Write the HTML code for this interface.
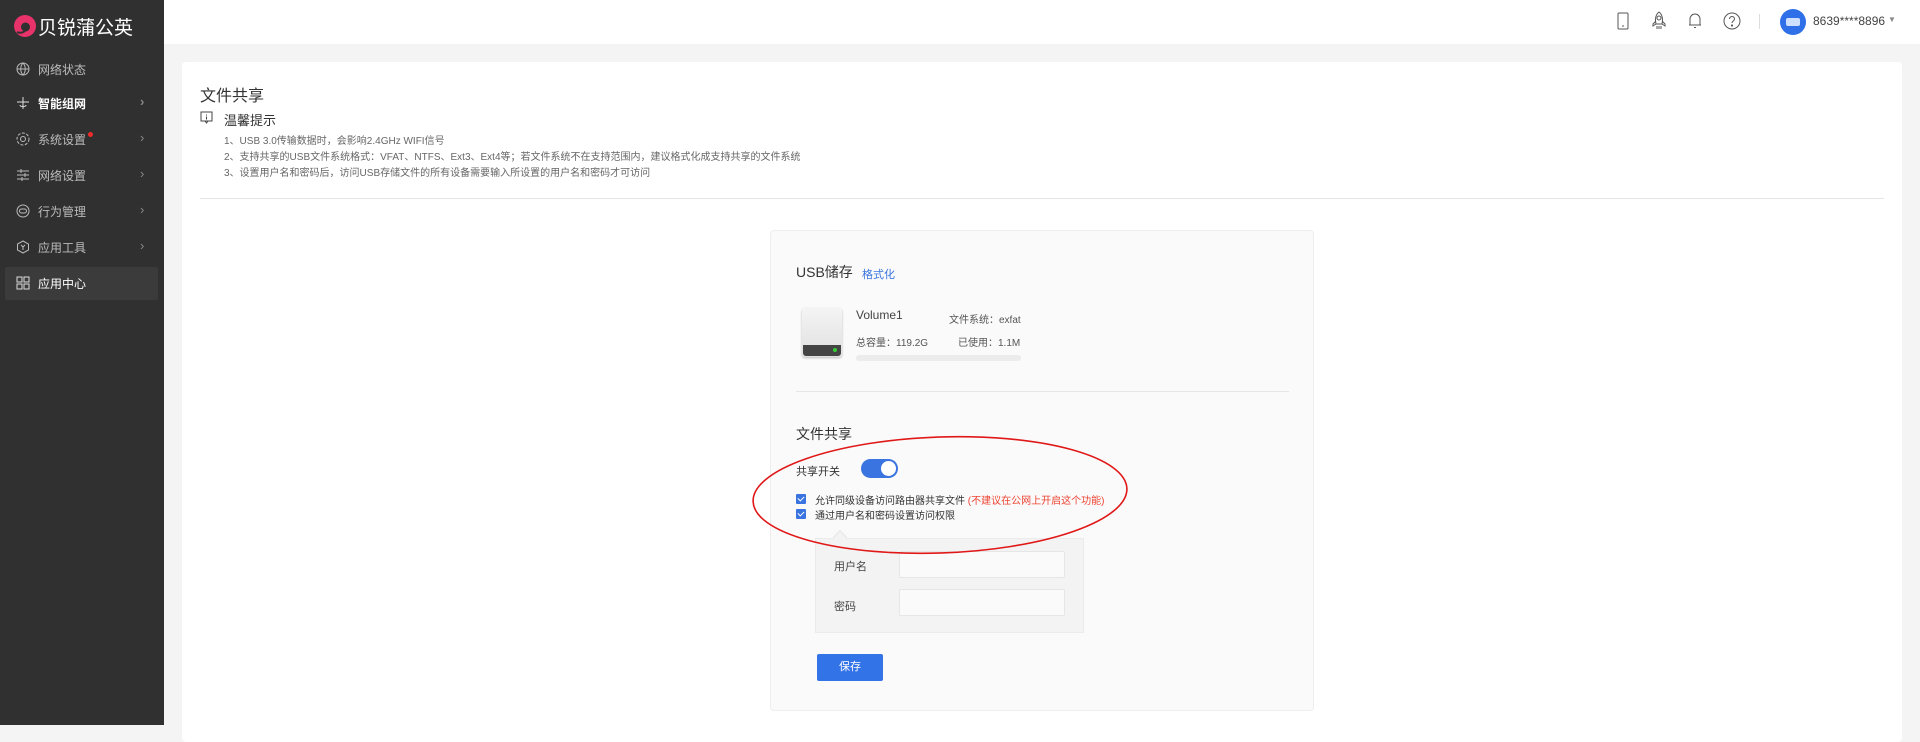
<!DOCTYPE html>
<html><head><meta charset="utf-8"><style>
*{margin:0;padding:0;box-sizing:border-box}
body{width:1920px;height:725px;overflow:hidden;background:#f4f4f4;font-family:"Liberation Sans","Noto Sans CJK SC",sans-serif;position:relative;color:#333}
.a{position:absolute}
#side{left:0;top:0;width:164px;height:725px;background:#303030}
#head{left:164px;top:0;width:1756px;height:44px;background:#fff}
.mi{position:absolute;left:0;width:164px;height:34px;color:#bbb;font-size:12px}
.mi span{position:absolute;left:38px;top:8px}
.mi svg{position:absolute;left:16px;top:9px}
.mi .ch{position:absolute;left:140px;top:7px;color:#888;font-size:13px;font-style:normal}
#card{left:182px;top:62px;width:1720px;height:680px;background:#fff;border-radius:4px}
.t{position:absolute;white-space:nowrap}
#panel{left:770px;top:230px;width:544px;height:481px;background:#fafafa;border:1px solid #eee;border-radius:4px}
.cb{position:absolute;width:10px;height:10px;background:#3a74e0;border-radius:1px}
.cb:after{content:"";position:absolute;left:3px;top:1px;width:3px;height:5px;border:solid #fff;border-width:0 1px 1px 0;transform:rotate(45deg)}
.inp{position:absolute;background:#fafafa;border:1px solid #e6e6e6;border-radius:2px}
</style></head><body>
<div id="side" class="a">
 <svg class="a" style="left:13px;top:14px" width="24" height="24" viewBox="0 0 24 24"><circle cx="12" cy="12" r="11" fill="#e8336a"/><circle cx="12.5" cy="13" r="4.5" fill="#303030"/><path d="M4 18 Q8 20 12 17" stroke="#303030" stroke-width="2" fill="none"/></svg>
 <div class="t" style="left:38px;top:13px;color:#fff;font-size:19px">贝锐蒲公英</div>
 <div class="mi" style="top:53px"><svg width="14" height="14" viewBox="0 0 14 14" fill="none" stroke="#bbb"><circle cx="7" cy="7" r="6"/><path d="M1 7h12M7 1c-3 3-3 9 0 12M7 1c3 3 3 9 0 12"/></svg><span>网络状态</span></div>
 <div class="mi" style="top:87px;color:#fff;font-weight:bold"><svg width="14" height="14" viewBox="0 0 14 14" fill="none" stroke="#ddd"><path d="M7 1v12M1 6h12M4 9c0 2 6 2 6 0"/></svg><span>智能组网</span><i class="ch">›</i></div>
 <div class="mi" style="top:123px"><svg width="14" height="14" viewBox="0 0 14 14" fill="none" stroke="#bbb"><circle cx="7" cy="7" r="2.5"/><circle cx="7" cy="7" r="6" stroke-dasharray="3 1.5"/></svg><span>系统设置</span><i class="ch">›</i></div>
 <div class="a" style="left:88px;top:132px;width:5px;height:5px;border-radius:50%;background:#f02b2b"></div>
 <div class="mi" style="top:159px"><svg width="14" height="14" viewBox="0 0 14 14" fill="none" stroke="#bbb"><path d="M1 3h12M1 7h12M1 11h12M5 1v4M9 5v4M6 9v4"/></svg><span>网络设置</span><i class="ch">›</i></div>
 <div class="mi" style="top:195px"><svg width="14" height="14" viewBox="0 0 14 14" fill="none" stroke="#bbb"><circle cx="7" cy="7" r="6"/><rect x="3.5" y="5" width="7" height="4" rx="2"/></svg><span>行为管理</span><i class="ch">›</i></div>
 <div class="mi" style="top:231px"><svg width="14" height="14" viewBox="0 0 14 14" fill="none" stroke="#bbb"><path d="M7 1l5.5 3v6L7 13 1.5 10V4z"/><path d="M5 5l2 2 2-2M7 7v3"/></svg><span>应用工具</span><i class="ch">›</i></div>
 <div class="a" style="left:5px;top:267px;width:153px;height:33px;background:#3b3b3b;border-radius:2px"></div>
 <div class="mi" style="top:267px;color:#fff"><svg width="14" height="14" viewBox="0 0 14 14" fill="none" stroke="#ddd"><rect x="1" y="1" width="5" height="5"/><rect x="8" y="1" width="5" height="5"/><rect x="1" y="8" width="5" height="5"/><rect x="8" y="8" width="5" height="5"/></svg><span>应用中心</span></div>
</div>
<div id="head" class="a">
 <svg class="a" style="left:1452px;top:12px" width="14" height="18" viewBox="0 0 14 18" fill="none" stroke="#555"><rect x="2" y="1" width="10" height="16" rx="1"/><path d="M6 14h2"/></svg>
 <svg class="a" style="left:1487px;top:11px" width="16" height="20" viewBox="0 0 16 20" fill="none" stroke="#555"><path d="M8 1c4 3 4 9 3 12H5C4 10 4 4 8 1z"/><circle cx="8" cy="7" r="2"/><path d="M5 10l-3 3v2l3-2M11 10l3 3v2l-3-2M6 15v3M8 15v3M10 15v3"/></svg>
 <svg class="a" style="left:1524px;top:11px" width="14" height="18" viewBox="0 0 14 18" fill="none" stroke="#555"><path d="M2 14V8a5 5 0 0110 0v6zM1 14h12M6 16.5h2"/></svg>
 <svg class="a" style="left:1559px;top:12px" width="18" height="18" viewBox="0 0 18 18" fill="none" stroke="#555"><circle cx="9" cy="9" r="8"/><path d="M6.5 7a2.5 2.5 0 115 0c0 2-2.5 2-2.5 4"/><circle cx="9" cy="13.5" r=".6" fill="#555"/></svg>
 <div class="a" style="left:1595px;top:14px;width:1px;height:15px;background:#ddd"></div>
 <div class="a" style="left:1616px;top:9px;width:26px;height:26px;border-radius:50%;background:#2f6fe8"></div>
 <div class="a" style="left:1622px;top:18px;width:14px;height:8px;border-radius:2px;background:#cfe0ff"></div>
 <div class="t" style="left:1649px;top:14px;font-size:12px;color:#444">8639****8896</div>
 <div class="t" style="left:1724px;top:15px;font-size:8px;color:#888">▼</div>
</div>
<div id="card" class="a"></div>
<div class="t" style="left:200px;top:82px;font-size:16px;color:#333">文件共享</div>
<svg class="a" style="left:200px;top:111px" width="13" height="13" viewBox="0 0 13 13" fill="none" stroke="#444"><rect x="1" y="1" width="11" height="9"/><path d="M6.5 3.5v1M6.5 5.5v3M5 10l1.5 2 1.5-2"/></svg>
<div class="t" style="left:224px;top:110px;font-size:13px;color:#333">温馨提示</div>
<div class="t" style="left:224px;top:134px;font-size:10px;color:#666;line-height:16px">1、USB 3.0传输数据时，会影响2.4GHz WIFI信号<br>2、支持共享的USB文件系统格式：VFAT、NTFS、Ext3、Ext4等；若文件系统不在支持范围内，建议格式化成支持共享的文件系统<br>3、设置用户名和密码后，访问USB存储文件的所有设备需要输入所设置的用户名和密码才可访问</div>
<div class="a" style="left:200px;top:198px;width:1684px;height:1px;background:#e5e5e5"></div>
<div id="panel" class="a"></div>
<div class="t" style="left:796px;top:262px;font-size:14px;color:#333">USB储存</div>
<div class="t" style="left:862px;top:266px;font-size:11px;color:#3a74e0">格式化</div>
<div class="a" style="left:802px;top:308px;width:40px;height:49px;border-radius:3px;background:linear-gradient(#f4f4f4,#e0e0e0);box-shadow:0 1px 2px rgba(0,0,0,.25)"></div>
<div class="a" style="left:803px;top:345px;width:38px;height:11px;border-radius:0 0 3px 3px;background:#444"></div>
<div class="a" style="left:833px;top:348px;width:4px;height:4px;border-radius:50%;background:#3c3"></div>
<div class="t" style="left:856px;top:308px;font-size:12px;color:#444">Volume1</div>
<div class="t" style="left:949px;top:311px;font-size:10px;color:#555">文件系统：exfat</div>
<div class="t" style="left:856px;top:334px;font-size:10px;color:#555">总容量：119.2G</div>
<div class="t" style="left:958px;top:334px;font-size:10px;color:#555">已使用：1.1M</div>
<div class="a" style="left:856px;top:355px;width:165px;height:6px;border-radius:3px;background:#ececec"></div>
<div class="a" style="left:796px;top:391px;width:493px;height:1px;background:#e5e5e5"></div>
<div class="t" style="left:796px;top:424px;font-size:14px;color:#333">文件共享</div>
<div class="t" style="left:796px;top:463px;font-size:11px;color:#333">共享开关</div>
<div class="a" style="left:861px;top:459px;width:37px;height:19px;border-radius:10px;background:#3a74e0"></div>
<div class="a" style="left:881px;top:461px;width:15px;height:15px;border-radius:50%;background:#fff"></div>
<div class="cb" style="left:796px;top:494px"></div>
<div class="t" style="left:815px;top:492px;font-size:10px;color:#333">允许同级设备访问路由器共享文件 <span style="color:#e43">(不建议在公网上开启这个功能)</span></div>
<div class="cb" style="left:796px;top:509px"></div>
<div class="t" style="left:815px;top:507px;font-size:10px;color:#333">通过用户名和密码设置访问权限</div>
<div class="a" style="left:815px;top:538px;width:269px;height:95px;background:#f3f3f3;border:1px solid #ebebeb"></div>
<div class="a" style="left:835px;top:532px;width:10px;height:10px;background:#f3f3f3;border-left:1px solid #e6e6e6;border-top:1px solid #e6e6e6;transform:rotate(45deg)"></div>
<div class="t" style="left:834px;top:558px;font-size:11px;color:#444">用户名</div>
<div class="inp" style="left:899px;top:551px;width:166px;height:27px"></div>
<div class="t" style="left:834px;top:598px;font-size:11px;color:#444">密码</div>
<div class="inp" style="left:899px;top:589px;width:166px;height:27px"></div>
<div class="a" style="left:817px;top:654px;width:66px;height:27px;background:#3373e8;border-radius:2px;color:#fff;font-size:11px;text-align:center;line-height:27px">保存</div>
<svg class="a" style="left:0;top:0" width="1920" height="725"><ellipse cx="940" cy="495" rx="187" ry="58" transform="rotate(-2 940 495)" fill="none" stroke="#e01818" stroke-width="1.6"/></svg>
</body></html>
